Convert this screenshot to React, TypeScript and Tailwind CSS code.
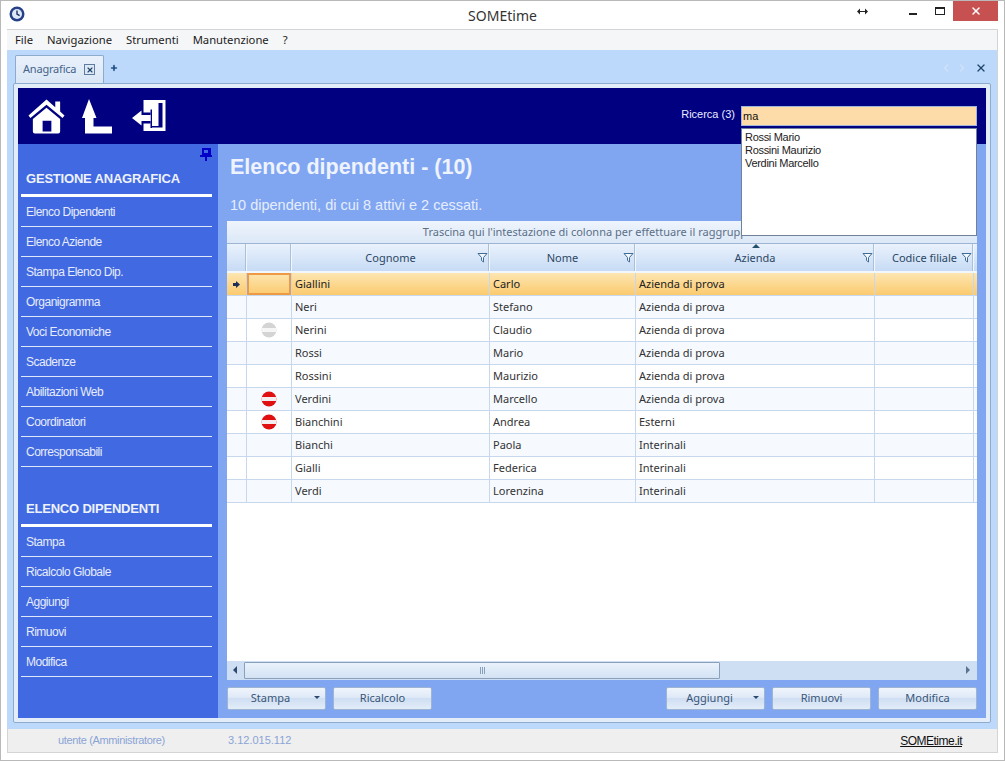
import { ChevronLeft, ChevronRight, Plus, X } from 'lucide-react'

const ui = "font-['Noto_Sans',sans-serif]"
const arial = "font-['Liberation_Sans',Arial,sans-serif]"

const rows = [
  { cognome: 'Giallini', nome: 'Carlo', azienda: 'Azienda di prova', icon: '' },
  { cognome: 'Neri', nome: 'Stefano', azienda: 'Azienda di prova', icon: '' },
  { cognome: 'Nerini', nome: 'Claudio', azienda: 'Azienda di prova', icon: 'gray' },
  { cognome: 'Rossi', nome: 'Mario', azienda: 'Azienda di prova', icon: '' },
  { cognome: 'Rossini', nome: 'Maurizio', azienda: 'Azienda di prova', icon: '' },
  { cognome: 'Verdini', nome: 'Marcello', azienda: 'Azienda di prova', icon: 'red' },
  { cognome: 'Bianchini', nome: 'Andrea', azienda: 'Esterni', icon: 'red' },
  { cognome: 'Bianchi', nome: 'Paola', azienda: 'Interinali', icon: '' },
  { cognome: 'Gialli', nome: 'Federica', azienda: 'Interinali', icon: '' },
  { cognome: 'Verdi', nome: 'Lorenzina', azienda: 'Interinali', icon: '' },
]

const gestione = [
  'Elenco Dipendenti',
  'Elenco Aziende',
  'Stampa Elenco Dip.',
  'Organigramma',
  'Voci Economiche',
  'Scadenze',
  'Abilitazioni Web',
  'Coordinatori',
  'Corresponsabili',
]
const elenco = ['Stampa', 'Ricalcolo Globale', 'Aggiungi', 'Rimuovi', 'Modifica']

function FilterIcon() {
  return (
    <svg width="11" height="11" viewBox="0 0 11 11" className="shrink-0">
      <path d="M1 1.5h9L6.5 5.5v4.5L4.5 8.5v-3z" fill="#f4f8fd" stroke="#3f6d96" strokeWidth="1" />
    </svg>
  )
}

function StopIcon({ color }: { color: string }) {
  const gray = color === 'gray'
  return (
    <svg width="16" height="16" viewBox="0 0 16 16">
      <circle cx="8" cy="8" r="7.5" fill={gray ? '#d4d4d4' : '#e01010'} />
      <rect x="0.5" y="6" width="15" height="4" fill={gray ? '#f6f6f6' : '#f4eeee'} />
    </svg>
  )
}

function SideMenu({ title, items, top }: { title: string; items: string[]; top: string }) {
  return (
    <div>
      <div className={`${top} flex items-end pb-[6px] pl-[5px] text-[13px] font-bold tracking-[-0.2px] text-[#eef2fc]`}>
        {title}
      </div>
      <div className="h-[3px] bg-white" />
      {items.map((item) => (
        <div
          key={item}
          className="h-[30px] border-b border-[#dfe8fb] pl-[5px] pt-[7px] text-[12px] leading-[16px] tracking-[-0.5px] text-[#e6ecfb]"
        >
          {item}
        </div>
      ))}
    </div>
  )
}

function GridButton({ label, menu }: { label: string; menu?: boolean }) {
  return (
    <div className="relative flex h-[23px] w-[99px] items-center justify-center rounded-[2px] border border-[#9db4d2] bg-[linear-gradient(#f0f5fc_0%,#dfe9f7_45%,#cfdef2_50%,#e3edf9_100%)] text-[11px] text-[#3a5678]">
      <span className={menu ? 'pr-[12px]' : ''}>{label}</span>
      {menu && <span className="absolute right-[5px] top-[8px] h-0 w-0 border-x-[3px] border-t-[3px] border-x-transparent border-t-[#2d4a6e]" />}
    </div>
  )
}

function HeaderCell({ label, className, filter }: { label?: string; className: string; filter?: boolean }) {
  return (
    <div className={`${className} relative flex shrink-0 items-center justify-center border-r border-[#f2f7fd] pt-[1px] shadow-[inset_-1px_0_0_#a9c0da]`}>
      {label && <span>{label}</span>}
      {filter && (
        <span className="absolute right-[1px] top-[8px]">
          <FilterIcon />
        </span>
      )}
    </div>
  )
}

export default function App() {
  return (
    <div className={`${ui} flex h-[761px] w-[1005px] flex-col overflow-hidden border border-[#b9b9b9] bg-white pl-[6px] pr-[6px] pb-[7px] text-[#1c1c1c]`}>
      {/* title bar */}
      <div className="relative flex h-[29px] shrink-0 items-center justify-center border-b border-[#d4d4d4] text-[14px] text-[#333]">
        <span className="pt-[1px]">SOMEtime</span>
        <svg width="16" height="16" viewBox="0 0 16 16" className="absolute left-[2px] top-[5px]">
          <circle cx="8" cy="8" r="7.5" fill="#26408a" />
          <circle cx="8" cy="8" r="5" fill="#dfe8f7" />
          <path d="M8 4.5V8l2.6 1.6" stroke="#1e2f63" strokeWidth="1.4" fill="none" />
        </svg>
        <svg width="11" height="7" viewBox="0 0 11 7" className="absolute left-[850px] top-[7px]">
          <path d="M0 3.5L3 .5V3h5V.5l3 3-3 3V4H3v2.500z" fill="#222" />
        </svg>
        <span className="absolute left-[902px] top-[12px] h-[2px] w-[8px] bg-[#222]" />
        <span className="absolute left-[928px] top-[6px] h-[8px] w-[10px] border border-t-2 border-[#222]" />
        <span className="absolute left-[946px] top-0 flex h-[20px] w-[45px] items-center justify-center bg-[#c75050] text-white">
          <X size={12} strokeWidth={3} />
        </span>
      </div>

      {/* menu */}
      <div className="flex h-[20px] shrink-0 items-center gap-[14px] border-r border-[#d4d4d4] bg-[#f5f6f7] pl-[8px] text-[11.25px] text-[#1c1c1c]">
        <span>File</span>
        <span>Navigazione</span>
        <span>Strumenti</span>
        <span>Manutenzione</span>
        <span>?</span>
      </div>

      {/* tab area */}
      <div className="flex min-h-0 flex-1 flex-col border-r border-[#d4d4d4] bg-[#bcd8fb]">
        <div className="flex h-[33px] shrink-0 items-end pl-[8px]">
          <div className="flex h-[28px] w-[89px] items-center gap-[8px] rounded-t-[2px] border border-b-0 border-[#8dabcc] bg-[linear-gradient(#e9f1fb,#dbe7f6)] pl-[7px] text-[11px] tracking-[-0.2px] text-[#44638a]">
            <span>Anagrafica</span>
            <span className="flex h-[11px] w-[11px] items-center justify-center border border-[#5d7c9f] bg-[#dce8f6] text-[#23456b]">
              <X size={8} strokeWidth={3.5} />
            </span>
          </div>
          <Plus size={8} strokeWidth={5} className="mb-[11px] ml-[6px] text-[#234f86]" />
          <div className="mb-[9px] ml-auto flex items-center gap-[4px] pr-[10px]">
            <ChevronLeft size={12} strokeWidth={3} className="text-[#cfe1f8]" />
            <ChevronRight size={12} strokeWidth={3} className="text-[#cfe1f8]" />
            <X size={12} strokeWidth={2.5} className="ml-[3px] text-[#1f4468]" />
          </div>
        </div>

        {/* panel */}
        <div className="mx-[6px] flex h-[640px] shrink-0 flex-col rounded-[2px] border border-[#8dabcc] bg-[#e3edf9] p-[4px]">
          <div className={`${arial} relative flex min-h-0 flex-1 flex-col`}>
            {/* top band */}
            <div className="flex h-[56px] shrink-0 items-start bg-[#000080] pl-[10px] pt-[10px]">
              <svg width="37" height="36" viewBox="0 0 38 36" className="shrink-0">
                <path d="M19 1 L28 9 V3 H33 V13.5 L37.5 17.5 L35.5 20 L19 6.500 L2.500 20 L0.500 17.500 Z" fill="#fff" />
                <path d="M19 9.500 L33 21 V34 Q33 36 31 36 H7 Q5 36 5 34 V21 Z M15 23 V34 H24 V23 Z" fill="#fff" fillRule="evenodd" />
              </svg>
              <svg width="30" height="35" viewBox="0 0 30 35" className="ml-[17px] mt-[1px] shrink-0">
                <path d="M7 0 L14.500 19 H11.500 V27.500 H30 V34.500 H3 V19 H0 Z" fill="#fff" />
              </svg>
              <svg width="34" height="32" viewBox="0 0 34 32" className="ml-[20px] mt-[2px] shrink-0">
                <path d="M11.500 0 H33.500 V31 H11.500 Z" fill="#fff" />
                <path d="M26.500 3 H30.500 V27.500 H19 V26 H26.500 Z" fill="#000080" />
                <path d="M18.500 9.500 H20 V28 H18.500 Z" fill="#000080" />
                <path d="M9 12.500 H18.500 V15 H11.500 V21 H18.500 V23.500 H9 Z" fill="#000080" />
                <path d="M0 18 L9.500 10.500 V15 H18.500 V21 H9.500 V25.500 Z" fill="#fff" />
              </svg>
              <span className="ml-auto mr-[6px] mt-[9px] text-[11px] leading-[14px] text-[#e8ecff]">Ricerca (3)</span>
              <div className="mr-[9px] mt-[8px] flex h-[20px] w-[236px] shrink-0 items-center border border-[#9fb6d6] bg-[#fddcaa] pl-[1px] text-[11px] text-[#111]">
                ma
              </div>
            </div>

            {/* suggestions */}
            <div className="absolute left-[723px] top-[40px] z-10 h-[108px] w-[236px] border border-[#6f8299] bg-white pl-[3px] pt-[2px] text-[11px] leading-[13px] tracking-[-0.3px] text-[#222]">
              <div>Rossi Mario</div>
              <div>Rossini Maurizio</div>
              <div>Verdini Marcello</div>
            </div>

            <div className="flex min-h-0 flex-1">
              {/* sidebar */}
              <div className="relative w-[200px] shrink-0 bg-[#4169e1] pl-[3px] pr-[6px]">
                <svg width="12" height="13" viewBox="0 0 12 13" className="absolute right-[6px] top-[4px]">
                  <path d="M2 0h9v7H2z M4 2v3h4V2z" fill="#0000c8" fillRule="evenodd" />
                  <path d="M0 7h12v2H0z M5 9h2v4H5z" fill="#0000c8" />
                </svg>
                <SideMenu title="GESTIONE ANAGRAFICA" items={gestione} top="h-[50px]" />
                <SideMenu title="ELENCO DIPENDENTI" items={elenco} top="h-[57px]" />
              </div>

              {/* content */}
              <div className="flex min-w-0 flex-1 flex-col bg-[#80a6f2] px-[9px]">
                <div className="flex h-[77px] shrink-0 flex-col pl-[3px]">
                  <div className="pt-[9px] text-[21.5px] font-bold leading-[28px] text-[#eef3fe]">Elenco dipendenti - (10)</div>
                  <div className="pt-[15px] text-[14.5px] leading-[18px] text-[#e6edfd]">10 dipendenti, di cui 8 attivi e 2 cessati.</div>
                </div>

                <div className={`${ui} flex h-[459px] shrink-0 flex-col bg-white text-[11px] text-[#333]`}>
                  <div className="flex h-[23px] shrink-0 items-center justify-center border-b border-[#9db4d2] bg-[linear-gradient(#eef4fc,#dce8f7)] pl-[6px] text-[#5b6f87]">
                    Trascina qui l&apos;intestazione di colonna per effettuare il raggruppamento
                  </div>
                  <div className="flex h-[29px] shrink-0 border-b-2 border-[#f2f7fd] bg-[linear-gradient(#eaf2fc,#c7dbf5)] text-[#2c4766]">
                    <HeaderCell className="w-[20px]" />
                    <HeaderCell className="w-[45px]" />
                    <HeaderCell label="Cognome" className="w-[198px]" filter />
                    <HeaderCell label="Nome" className="w-[146px]" filter />
                    <HeaderCell label="Azienda" className="w-[239px]" filter />
                    <HeaderCell label="Codice filiale" className="w-[99px] !justify-start pl-[17px]" filter />
                    <span className="absolute left-[734px] top-[156px] h-0 w-0 border-x-[4px] border-b-[4px] border-x-transparent border-b-[#24506f]" />
                  </div>
                  <div className="min-h-0 flex-1">
                    {rows.map((row, i) => (
                      <div
                        key={row.cognome}
                        className={`flex h-[23px] border-b border-[#c7d8ec] ${
                          i === 0
                            ? 'bg-[linear-gradient(#fde6b2,#fbca6e)] text-[#222]'
                            : i % 2 === 1
                              ? 'bg-[#f6faff]'
                              : 'bg-white'
                        }`}
                      >
                        <div className="flex w-[20px] shrink-0 items-center justify-center border-r border-[#c7d8ec]">
                          {i === 0 && (
                            <svg width="7" height="7" viewBox="0 0 7 7">
                              <path d="M0 2h3V0l4 3.500L3 7V5H0z" fill="#1e2f55" />
                            </svg>
                          )}
                        </div>
                        <div className={`flex w-[45px] shrink-0 items-center justify-center border-r border-[#c7d8ec] ${i === 0 ? 'shadow-[inset_0_0_0_2px_#ee9a44]' : ''}`}>
                          {row.icon && <StopIcon color={row.icon} />}
                        </div>
                        <div className="flex w-[198px] shrink-0 items-center border-r border-[#c7d8ec] pl-[3px]">{row.cognome}</div>
                        <div className="flex w-[146px] shrink-0 items-center border-r border-[#c7d8ec] pl-[3px]">{row.nome}</div>
                        <div className="flex w-[239px] shrink-0 items-center border-r border-[#c7d8ec] pl-[3px]">{row.azienda}</div>
                        <div className="w-[99px] shrink-0 border-r border-[#c7d8ec]" />
                      </div>
                    ))}
                  </div>
                  <div className="flex h-[19px] shrink-0 items-center bg-[#cfdff3] pb-[1px]">
                    <span className="ml-[6px] h-0 w-0 border-y-[4px] border-r-[4px] border-y-transparent border-r-[#2d4a6e]" />
                    <div className="ml-[7px] flex h-[17px] w-[476px] items-center justify-center rounded-[1px] border border-[#8aa0ba] bg-[linear-gradient(#eaf2fb,#d3e2f4)]">
                      <span className="h-[7px] w-[5px] border-x border-[#8aa0ba] bg-[linear-gradient(90deg,transparent_40%,#8aa0ba_40%,#8aa0ba_60%,transparent_60%)]" />
                    </div>
                    <span className="ml-auto mr-[7px] h-0 w-0 border-y-[4px] border-l-[4px] border-y-transparent border-l-[#5a7390]" />
                  </div>
                </div>

                <div className={`${ui} flex flex-1 items-start gap-[7px] pt-[7px]`}>
                  <GridButton label="Stampa" menu />
                  <GridButton label="Ricalcolo" />
                  <div className="flex-1" />
                  <GridButton label="Aggiungi" menu />
                  <GridButton label="Rimuovi" />
                  <GridButton label="Modifica" />
                </div>
              </div>
            </div>
          </div>
        </div>
        <div className="flex-1" />
      </div>

      {/* status bar */}
      <div className={`${arial} flex h-[24px] shrink-0 items-center border-x border-b border-[#d4d4d4] bg-[#efefef] text-[11px] text-[#8aa4d6]`}>
        <span className="ml-[50px] w-[170px] tracking-[-0.35px]">utente (Amministratore)</span>
        <span>3.12.015.112</span>
        <span className="ml-auto mr-[35px] text-[12px] tracking-[-0.5px] text-[#111] underline">SOMEtime.it</span>
      </div>
    </div>
  )
}
